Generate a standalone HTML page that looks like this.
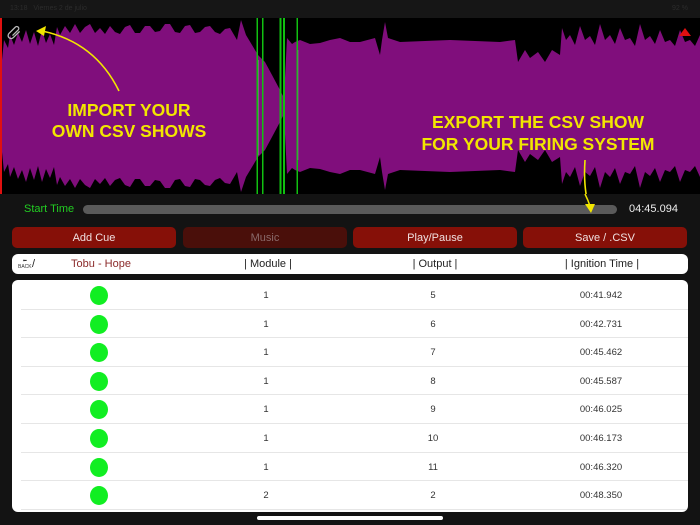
<!DOCTYPE html>
<html><head><meta charset="utf-8"><style>
*{margin:0;padding:0;box-sizing:border-box}
body{width:700px;height:525px;background:#131313;position:relative;overflow:hidden;font-family:"Liberation Sans",sans-serif}
.abs{position:absolute}
.status{top:0;left:0;width:700px;height:18px;background:#161616;color:#2c2c2c;font-size:7px;}
.btn{position:absolute;top:227px;height:21px;border-radius:5px;background:#861008;color:#f0e0e0;font-size:11px;text-align:center;line-height:22px}
.hdr{position:absolute;left:12px;top:254px;width:676px;height:20px;background:#fff;border-radius:6px;font-size:11px;color:#222;line-height:20px}
.hdr span{position:absolute;top:0;transform:translateX(-50%)}
.tbl{position:absolute;left:12px;top:280px;width:676px;height:232px;background:#fff;border-radius:6px;overflow:hidden}
.row{position:absolute;left:0;width:676px;height:28.6px;font-size:9.5px;color:#333}
.row .sep{position:absolute;left:9px;right:0;bottom:0;height:1px;background:#e6e6e6}
.row span{position:absolute;top:0;line-height:29px;transform:translateX(-50%)}
.dot{position:absolute;left:78px;top:5px;width:18px;height:19px;border-radius:50%;background:#11ee22}
</style></head><body>
<div class="abs status"><span style="position:absolute;left:10px;top:5px">13:18 &nbsp; Viernes 2 de julio</span><span style="position:absolute;right:12px;top:5px">92 %</span></div>
<svg class="abs" style="left:0;top:18px" width="700" height="176" viewBox="0 18 700 176">
<rect x="0" y="18" width="700" height="176" fill="#000"/>
<g fill="#800e7c">
<polygon id="wt" points="0,106 2,60 4,40 8,48 10,35 14,45 18,33 22,42 26,30 30,44 34,32 38,46 42,30 46,43 50,34 54,45 57,27 60,35 65,26 70,33 75,24 80,33 85,27 90,24 95,33 100,28 105,34 110,26 115,32 120,34 125,27 130,25 135,33 140,33 145,26 150,26 155,32 160,31 165,24 170,24 175,32 180,33 185,26 190,25 195,33 200,32 205,27 210,26 215,32 220,34 225,29 230,28 237,40 241,20 246,35 252,45 258,55 265,62 272,75 280,90 284,98 287,38 292,44 295,42 300,40 310,44 320,43 330,40 340,38 350,42 360,42 375,38 380,55 382,40 385,22 388,38 400,42 450,40 500,42 515,40 518,62 525,50 530,58 538,52 545,62 552,50 560,55 562,28 566,40 570,35 575,45 580,26 585,40 590,36 595,45 600,24 605,40 610,35 615,44 620,28 625,40 630,38 635,46 640,24 645,40 650,36 655,44 660,30 665,42 670,40 675,46 680,30 685,42 690,40 695,46 700,35 700,106"/>
<use href="#wt" transform="matrix(1,0,0,-1,0,212)"/>
</g>
<rect x="0" y="18" width="2" height="176" fill="#e01010"/>
<g fill="#11c011">
<rect x="256.5" y="18" width="1.5" height="176"/><rect x="262" y="18" width="1.5" height="176"/>
<rect x="279.5" y="18" width="2" height="176"/><rect x="283" y="18" width="2" height="176"/><rect x="296.5" y="18" width="1.5" height="176"/>
</g>
<rect x="258" y="60" width="1" height="95" fill="#888" opacity=".6"/><rect x="297.5" y="50" width="1" height="110" fill="#888" opacity=".6"/>
<polygon points="679,36 685,28 691,36" fill="#e01010"/>
<g transform="translate(15,31) rotate(-45)" fill="none" stroke="#bbb" stroke-width="1.3"><path d="M-5,1.5 h8 a2,2 0 0 0 0,-4 h-9 a3,3 0 0 0 0,6 h9"/></g>
<g fill="none" stroke="#f2e600" stroke-width="1.6">
<path d="M119,91 Q95,42 42,31"/>
<path d="M585,160 Q583,190 590,210"/>
</g>
<polygon points="36,31 46,26 44,36" fill="#f2e600"/>
<g font-family="Liberation Sans,sans-serif" font-weight="bold" font-size="17.5" fill="#f2e600" text-anchor="middle">
<text x="129" y="116">IMPORT YOUR</text><text x="129" y="137">OWN CSV SHOWS</text>
<text x="538" y="128">EXPORT THE CSV SHOW</text><text x="538" y="150">FOR YOUR FIRING SYSTEM</text>
</g>
</svg>
<div class="abs" style="left:24px;top:203px;color:#22cc22;font-size:11px">Start Time</div>
<div class="abs" style="left:83px;top:205px;width:534px;height:9px;border-radius:5px;background:#5a5a5a"></div>
<svg class="abs" style="left:580px;top:194px" width="20" height="24"><polygon points="5,10 15,10 11,19" fill="#f2e600"/><path d="M5,0 Q8,6 10,12" stroke="#f2e600" stroke-width="1.5" fill="none"/></svg>
<div class="abs" style="left:629px;top:203px;color:#eee;font-size:11px">04:45.094</div>
<div class="btn" style="left:12px;width:164px">Add Cue</div>
<div class="btn" style="left:183px;width:164px;background:#4a0f0a;color:#8a6a6a">Music</div>
<div class="btn" style="left:353px;width:164px">Play/Pause</div>
<div class="btn" style="left:523px;width:164px">Save / .CSV</div>
<div class="hdr">
<span style="left:6px;transform:none;font-size:5px;line-height:6px;top:4px;color:#333;text-align:center">⬅<br>BACK</span><span style="left:20px;transform:none">/</span>
<span style="left:89px;color:#8b2a2a">Tobu - Hope</span>
<span style="left:256px">| Module |</span><span style="left:423px">| Output |</span><span style="left:590px">| Ignition Time |</span>
</div>
<div class="tbl">
<div class="row" style="top:1px"><div class="dot"></div><span style="left:254px">1</span><span style="left:421px">5</span><span style="left:589px">00:41.942</span><div class="sep"></div></div>
<div class="row" style="top:29.6px"><div class="dot"></div><span style="left:254px">1</span><span style="left:421px">6</span><span style="left:589px">00:42.731</span><div class="sep"></div></div>
<div class="row" style="top:58.2px"><div class="dot"></div><span style="left:254px">1</span><span style="left:421px">7</span><span style="left:589px">00:45.462</span><div class="sep"></div></div>
<div class="row" style="top:86.8px"><div class="dot"></div><span style="left:254px">1</span><span style="left:421px">8</span><span style="left:589px">00:45.587</span><div class="sep"></div></div>
<div class="row" style="top:115.4px"><div class="dot"></div><span style="left:254px">1</span><span style="left:421px">9</span><span style="left:589px">00:46.025</span><div class="sep"></div></div>
<div class="row" style="top:144px"><div class="dot"></div><span style="left:254px">1</span><span style="left:421px">10</span><span style="left:589px">00:46.173</span><div class="sep"></div></div>
<div class="row" style="top:172.6px"><div class="dot"></div><span style="left:254px">1</span><span style="left:421px">11</span><span style="left:589px">00:46.320</span><div class="sep"></div></div>
<div class="row" style="top:201.2px"><div class="dot"></div><span style="left:254px">2</span><span style="left:421px">2</span><span style="left:589px">00:48.350</span><div class="sep"></div></div>
</div>
<div class="abs" style="left:257px;top:516px;width:186px;height:4px;border-radius:2px;background:#fff"></div>
</body></html>
